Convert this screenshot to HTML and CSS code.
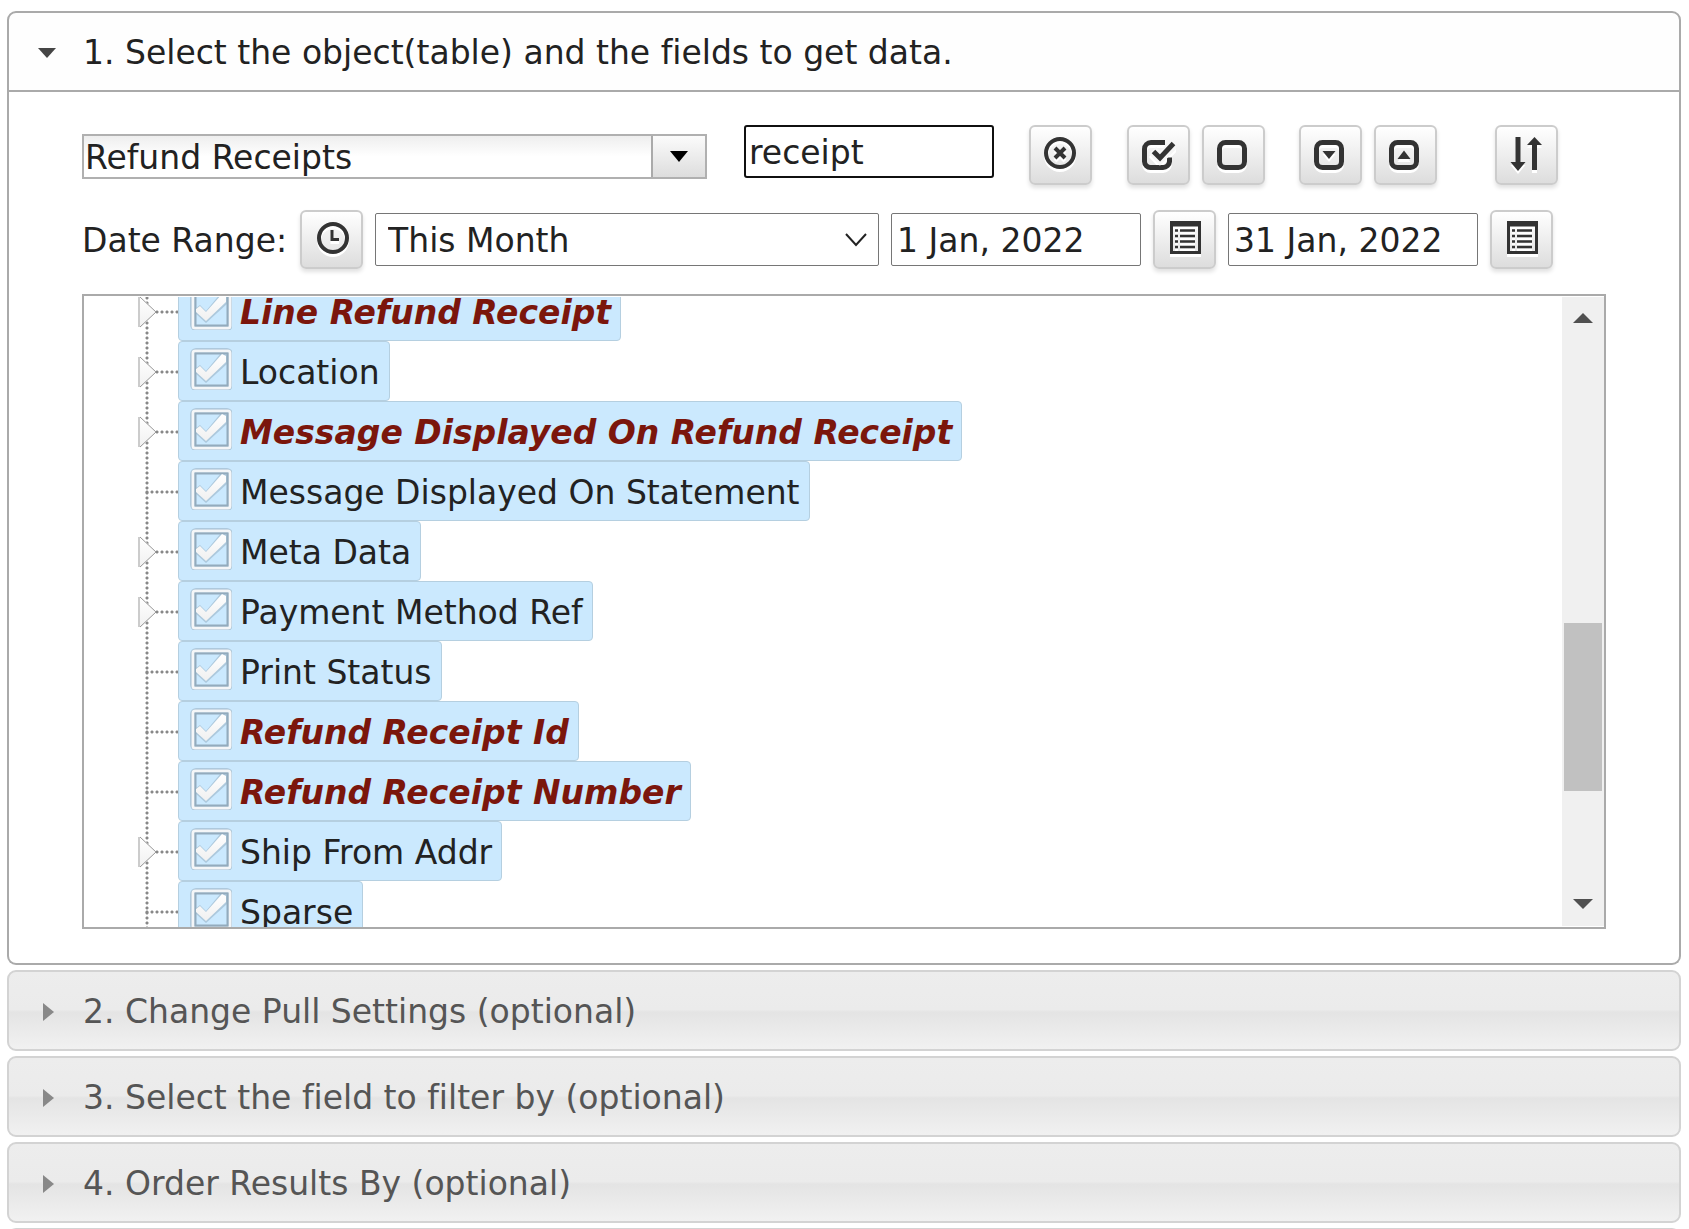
FILE: index.html
```
<!DOCTYPE html>
<html lang="en">
<head>
  <meta charset="UTF-8">
  <title>Select data</title>
  <meta name="viewport" content="width=device-width, initial-scale=1.0">
  <link rel="stylesheet" href="styles.css">
</head>

<body>

  <!-- Shared icons -->
  <svg class="defs" width="0" height="0" aria-hidden="true">
    <defs>
      <linearGradient id="shade" x1="0" y1="0" x2="0" y2="1">
        <stop offset="0" stop-color="#fff"/>
        <stop offset="1" stop-color="#f0f0f0"/>
      </linearGradient>
      <symbol id="check" viewBox="0 0 42 42">
        <rect x="3" y="3" width="37" height="37" rx="3" fill="none" stroke="#8fa9bb" stroke-width="6" opacity=".3"/>
        <rect x="3" y="3" width="37" height="37" rx="3" fill="none" stroke="#8fa9bb" stroke-width="5" opacity=".5"/>
        <rect x="3" y="3" width="37" height="37" rx="2" fill="none" stroke="#f4f6f8" stroke-width="3"/>
        <rect x="5.500" y="5.500" width="32" height="32" fill="none" stroke="#93abbd" stroke-width="2"/>
        <path d="M5 21l5-4 6 6L31 5l6 2v9L16 35 5 25z" fill="#8fa9bb" opacity=".5"/>
        <path d="M6 21l4-3 6 6L32 6l4 2v6L16 33 6 24z" fill="url(#shade)"/>
      </symbol>
      <symbol id="list" viewBox="0 0 34 34">
        <path d="M2 1h31v33H2zM5 6.500v24.500h25V6.500z" fill="#333" fill-rule="evenodd"/>
        <path d="M7 10.500h3M7 16h3M7 21.500h3M7 27h3M12 10.500h15M12 16h15M12 21.500h15M12 27h15" stroke="#333" stroke-width="2.500"/>
      </symbol>
    </defs>
  </svg>

  <div class="accordion">

    <section class="panel open">
      <button class="panel-header" type="button" aria-expanded="true">
        <span class="arrow-down"></span>1. Select the object(table) and the fields to get data.
      </button>

      <div class="panel-content">
        <div class="toolbar">
          <div class="combo">
            <input type="text" value="Refund Receipts" aria-label="Object">
            <button type="button" aria-label="Show all objects"><span class="combo-arrow"></span></button>
          </div>
          <input class="field search" type="text" value="receipt" aria-label="Search fields">
          <button class="icon-btn clear" type="button" aria-label="Clear">
            <svg viewBox="0 0 34 34" width="34" height="34"><circle cx="16" cy="16" r="14" fill="none" stroke="#333" stroke-width="4"/><path d="M11 11l10 10M21 11L11 21" stroke="#333" stroke-width="4"/></svg>
          </button>
          <div class="btn-group">
            <button class="icon-btn" type="button" aria-label="Check all">
              <svg viewBox="0 0 34 34" width="34" height="34"><path d="M23 5.500H9a6.500 6.500 0 0 0-6.500 6.500v12.500A6 6 0 0 0 9 30.500h12a6.500 6.500 0 0 0 6.500-6v-4" fill="none" stroke="#333" stroke-width="5"/><path d="M10.500 13.500l7.500 8L33 6" fill="none" stroke="#f6f6f6" stroke-width="10"/><path d="M11.500 14.500l6.500 6.500L31.500 6.500" fill="none" stroke="#333" stroke-width="5"/></svg>
            </button>
            <button class="icon-btn" type="button" aria-label="Uncheck all">
              <svg viewBox="0 0 34 34" width="34" height="34"><rect x="2.500" y="5.500" width="25" height="25" rx="6" fill="none" stroke="#333" stroke-width="5"/></svg>
            </button>
          </div>
          <div class="btn-group">
            <button class="icon-btn" type="button" aria-label="Expand all">
              <svg viewBox="0 0 34 34" width="34" height="34"><rect x="2.500" y="5.500" width="25" height="25" rx="6" fill="none" stroke="#333" stroke-width="5"/><path d="M8.500 14h13L15 22z" fill="#333"/></svg>
            </button>
            <button class="icon-btn" type="button" aria-label="Collapse all">
              <svg viewBox="0 0 34 34" width="34" height="34"><rect x="2.500" y="5.500" width="25" height="25" rx="6" fill="none" stroke="#333" stroke-width="5"/><path d="M8.500 22h13L15 13.500z" fill="#333"/></svg>
            </button>
          </div>
          <button class="icon-btn sort" type="button" aria-label="Sort">
            <svg viewBox="0 0 34 36" width="34" height="36"><path d="M5.500 1h5v25h5L8 35 .5 26h5zM22 34h5V9h5L24.500 1 17 9h5z" fill="#333"/></svg>
          </button>
        </div>

        <div class="date-row">
          <label for="range">Date Range:</label>
          <button class="icon-btn" type="button" aria-label="Date range">
            <svg viewBox="0 0 34 34" width="34" height="34"><circle cx="18" cy="16" r="14" fill="none" stroke="#333" stroke-width="4"/><path d="M17 8v9.500h7" fill="none" stroke="#333" stroke-width="3"/></svg>
          </button>
          <div class="select-wrap">
            <select class="field" id="range">
              <option>This Month</option>
            </select>
            <svg class="chevron" viewBox="0 0 22 14" width="22" height="14"><path d="M1 1l10 11L21 1" fill="none" stroke="#222" stroke-width="2"/></svg>
          </div>
          <input class="field" type="text" value="1 Jan, 2022" aria-label="From">
          <button class="icon-btn" type="button" aria-label="Pick start date"><svg width="34" height="38"><use href="#list" width="34" height="34"/></svg></button>
          <input class="field" type="text" value="31 Jan, 2022" aria-label="To">
          <button class="icon-btn" type="button" aria-label="Pick end date"><svg width="34" height="38"><use href="#list" width="34" height="34"/></svg></button>
        </div>

        <div class="tree-box">
          <ul class="tree">
            <li class="parent"><a href="#" class="match"><svg><use href="#check"/></svg>Line Refund Receipt</a></li>
            <li class="parent"><a href="#"><svg><use href="#check"/></svg>Location</a></li>
            <li class="parent"><a href="#" class="match"><svg><use href="#check"/></svg>Message Displayed On Refund Receipt</a></li>
            <li><a href="#"><svg><use href="#check"/></svg>Message Displayed On Statement</a></li>
            <li class="parent"><a href="#"><svg><use href="#check"/></svg>Meta Data</a></li>
            <li class="parent"><a href="#"><svg><use href="#check"/></svg>Payment Method Ref</a></li>
            <li><a href="#"><svg><use href="#check"/></svg>Print Status</a></li>
            <li><a href="#" class="match"><svg><use href="#check"/></svg>Refund Receipt Id</a></li>
            <li><a href="#" class="match"><svg><use href="#check"/></svg>Refund Receipt Number</a></li>
            <li class="parent"><a href="#"><svg><use href="#check"/></svg>Ship From Addr</a></li>
            <li><a href="#"><svg><use href="#check"/></svg>Sparse</a></li>
          </ul>
          <div class="scrollbar">
            <span class="scroll-up"></span>
            <span class="thumb"></span>
            <span class="scroll-down"></span>
          </div>
        </div>
      </div>
    </section>

    <section class="panel">
      <button class="panel-header" type="button"><span class="arrow-right"></span>2. Change Pull Settings (optional)</button>
    </section>
    <section class="panel">
      <button class="panel-header" type="button"><span class="arrow-right"></span>3. Select the field to filter by (optional)</button>
    </section>
    <section class="panel">
      <button class="panel-header" type="button"><span class="arrow-right"></span>4. Order Results By (optional)</button>
    </section>
    <section class="panel">
      <button class="panel-header" type="button" aria-label="Next step"><span class="arrow-right"></span></button>
    </section>

  </div>

  <script>
    // turn the arrow rows into expanders
    document.querySelectorAll(".tree .parent").forEach(li => {
      const svg = document.createElementNS("http://www.w3.org/2000/svg", "svg");
      svg.setAttribute("class", "expander");
      svg.setAttribute("viewBox", "0 0 20 32");
      svg.innerHTML = '<path d="M1 1v30h3L19 16 4 1z" fill="url(#shade)"/><path d="M2 1v30" stroke="#ccc" stroke-width="2"/><path d="M3 1l16 15L3 31" fill="none" stroke="#999" stroke-width="1"/>';
      li.prepend(svg);
    });
  </script>

</body>
</html>
```
FILE: styles.css
```
* {
  box-sizing: border-box;
}

html, body {
  margin: 0;
  padding: 0;
  background: #fff;
  overflow: hidden;
}

body, button, input, select {
  font-family: Verdana, 'DejaVu Sans', sans-serif;
  font-size: 33px;
  line-height: 40px;
  font-variant-ligatures: none;
  color: #222;
}

.defs {
  position: absolute;
}

.accordion {
  display: flex;
  flex-direction: column;
  gap: 5px;
  padding: 11px 8px 0 7px;
}

.panel-header {
  display: flex;
  align-items: center;
  width: 100%;
  height: 81px;
  padding: 2px 0 0 29px;
  border: 2px solid #d3d3d3;
  border-radius: 9px;
  background: linear-gradient(#ededed, #ebebeb 49%, #e4e4e4 52%, #f1f1f1);
  color: #555;
  text-align: left;
  cursor: pointer;
}

.open .panel-header {
  border-color: #aaa;
  border-radius: 9px 9px 0 0;
  background: #fefefe;
  color: #222;
}

.arrow-down, .arrow-right {
  flex: none;
  width: 45px;
}

.arrow-down::before, .arrow-right::before {
  content: "";
  display: block;
  width: 0;
  border: 9px solid transparent;
}

.arrow-down::before {
  border-top: 10px solid #454545;
  border-bottom: 0;
}

.arrow-right::before {
  margin-left: 5px;
  border-left: 11px solid #888;
  border-right: 0;
}

.panel-content {
  padding: 33px 73px 34px;
  border: 2px solid #aaa;
  border-top: 0;
  border-radius: 0 0 9px 9px;
}

/* toolbar */
.toolbar, .date-row {
  display: flex;
  align-items: center;
}

.toolbar {
  height: 60px;
}

.combo {
  display: flex;
  width: 625px;
  height: 45px;
  margin: 3px 37px 0 0;
  border: 2px solid #b0b0b0;
}

.combo input {
  flex: 1;
  min-width: 0;
  padding: 2px 1px 0;
  border: 0;
  background: linear-gradient(#eee, #fff 50%);
}

.combo button {
  width: 54px;
  padding: 0;
  border: 0;
  border-left: 2px solid #aaa;
  background: linear-gradient(#fbfbfb, #ddd);
}

.combo-arrow {
  display: block;
  width: 0;
  margin: 0 auto;
  border: 9px solid transparent;
  border-top: 11px solid #000;
  border-bottom: 0;
}

.field {
  width: 250px;
  height: 53px;
  padding: 2px 5px 0;
  border: 1px solid #767676;
  border-radius: 2px;
  background: #fff;
}

.search {
  align-self: flex-start;
  padding: 2px 3px 0;
  border: 2px solid #101010;
  border-radius: 3px;
}

.icon-btn {
  display: flex;
  align-items: center;
  justify-content: center;
  flex: none;
  width: 63px;
  height: 60px;
  padding: 0 0 2px;
  border: 2px solid #ccc;
  border-radius: 6px;
  background: linear-gradient(#fff, #ddd);
  box-shadow: 0 3px 4px rgba(0, 0, 0, .12);
  cursor: pointer;
}

.icon-btn svg {
  filter: drop-shadow(0 3px 0 #fff);
}

.clear {
  margin: 0 35px;
}

.btn-group {
  display: flex;
  gap: 12px;
  margin-right: 34px;
}

.sort {
  margin-left: 24px;
}

.date-row {
  gap: 12px;
  margin-top: 25px;
}

.date-row .icon-btn {
  height: 59px;
}

.date-row label {
  padding: 2px 1px 0 0;
}

.select-wrap {
  position: relative;
  width: 504px;
}

.select-wrap select {
  appearance: none;
  width: 100%;
  padding: 2px 12px 0;
  display: block;
}

.chevron {
  position: absolute;
  right: 12px;
  top: 20px;
  pointer-events: none;
}

/* field tree */
.tree-box {
  display: flex;
  height: 635px;
  margin-top: 25px;
  padding: 1px 0;
  border: 2px solid #aaa;
  overflow: hidden;
}

.tree {
  flex: 1;
  height: 631px;
  margin: 0;
  padding: 0 0 0 61px;
  list-style: none;
  overflow: hidden;
}

.tree li {
  position: relative;
  display: flex;
  align-items: center;
  height: 60px;
  background: radial-gradient(circle at 2px 2px, #888 1px, transparent 2px) 0 0 / 5px 5px repeat-y;
}

.tree li::before {
  content: "";
  width: 33px;
  height: 5px;
  margin-top: 2px;
  background: radial-gradient(circle at 2px 2px, #888 1px, transparent 2px) 0 0 / 5px 5px;
}

.tree li:first-child {
  margin-top: -16px;
}

.tree a {
  display: flex;
  align-items: center;
  height: 60px;
  padding: 3px 9px 0 11px;
  border: 1px solid #b5cfe0;
  border-radius: 4px;
  background: #cbe9fe;
  color: #222;
  text-decoration: none;
  white-space: nowrap;
}

.tree a svg {
  width: 42px;
  height: 42px;
  margin: 0 8px 8px 0;
}

.tree a.match {
  color: #7b160c;
  font-weight: bold;
  font-style: italic;
}

.tree .expander {
  position: absolute;
  left: -8px;
  top: 15px;
  width: 20px;
  height: 32px;
}

.scrollbar {
  display: flex;
  flex-direction: column;
  align-items: center;
  width: 42px;
  background: #f0f0f0;
}

.scroll-up, .scroll-down {
  border: 10px solid transparent;
}

.scroll-up {
  margin: 16px 0 300px;
  border-top: 0;
  border-bottom-color: #505050;
}

.thumb {
  width: 38px;
  height: 168px;
  background: #c1c1c1;
}

.scroll-down {
  margin: auto 0 17px;
  border-bottom: 0;
  border-top-color: #505050;
}
```
